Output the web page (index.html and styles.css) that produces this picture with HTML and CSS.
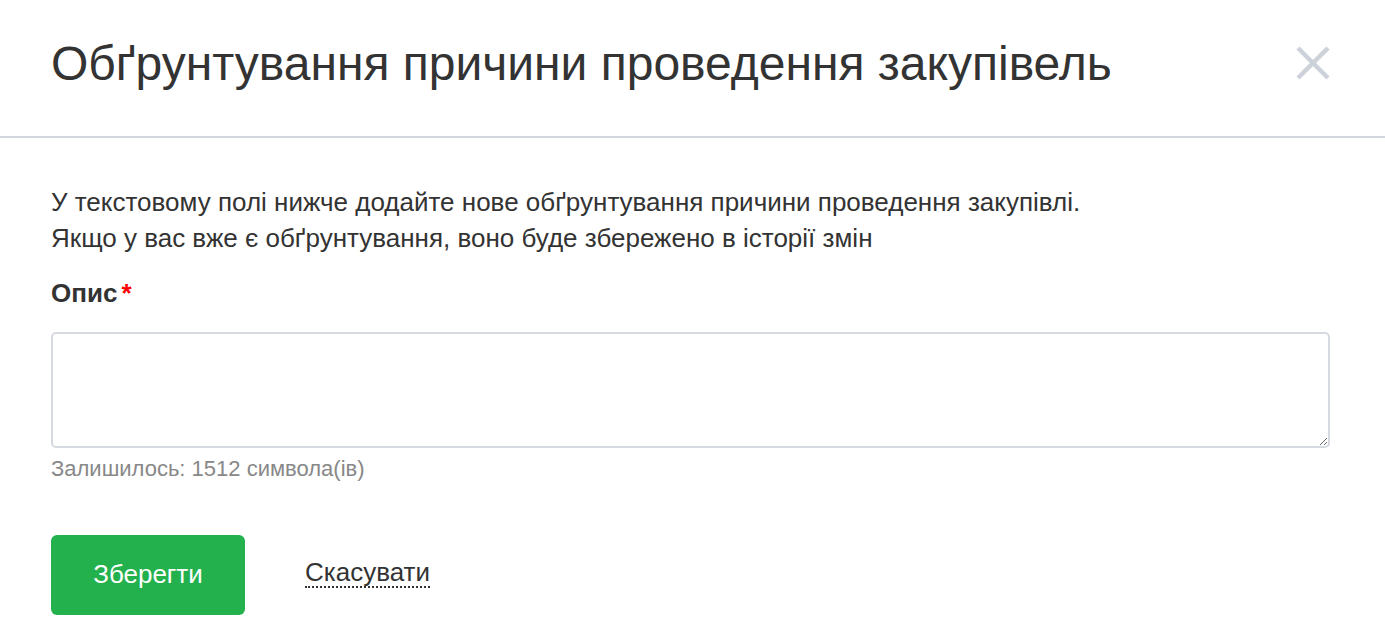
FILE: index.html
```html
<!DOCTYPE html>
<html lang="uk">
<head>
<meta charset="utf-8">
<link rel="stylesheet" href="styles.css">
</head>
<body>
<div class="modal">
  <div class="modal-header">
    <h1 class="modal-title">Обґрунтування причини проведення закупівель</h1>
    <button class="close" aria-label="Закрити">
      <svg width="34" height="34" viewBox="0 0 34 34"><path d="M2 2 L32 32 M32 2 L2 32" stroke="#cdd1da" stroke-width="4.5" fill="none"/></svg>
    </button>
  </div>
  <div class="modal-body">
    <p class="intro">У текстовому полі нижче додайте нове обґрунтування причини проведення закупівлі.<br>Якщо у вас вже є обґрунтування, воно буде збережено в історії змін</p>
    <label class="label">Опис<span class="req">*</span></label>
    <textarea class="field"></textarea>
    <div class="hint">Залишилось: 1512 символа(ів)</div>
    <div class="actions">
      <button class="btn-save">Зберегти</button>
      <a class="cancel">Скасувати</a>
    </div>
  </div>
</div>
</body>
</html>
```
FILE: styles.css
```css
html, body { margin: 0; padding: 0; background: #fff; }
body { font-family: "Liberation Sans", Arial, sans-serif; color: #333; }
.modal { width: 1385px; }
.modal-header {
  display: flex; align-items: center; justify-content: space-between;
  padding: 0 55px 10px 51px; height: 126px;
  border-bottom: 2px solid #d3d6de;
}
.modal-title { margin: 0; font-weight: 400; font-size: 48px; color: #333; }
.close { border: 0; background: none; padding: 0; margin: 0; display: flex; cursor: pointer; }
.modal-body { padding: 46px 55px 0 51px; }
.intro { margin: 0; font-size: 26px; line-height: 36px; color: #333; }
.label { display: block; margin-top: 20px; font-weight: 700; font-size: 26px; line-height: 34px; color: #333; }
.req { color: #f00; margin-left: 4px; }
.field {
  display: block; box-sizing: border-box; width: 1279px; height: 116px; margin-top: 22px;
  border: 2px solid #d6d9e0; border-radius: 5px; resize: vertical; font: inherit;
}
.hint { margin-top: 8px; font-size: 22px; line-height: 26px; color: #888; }
.actions { display: flex; align-items: center; gap: 60px; margin-top: 53px; }
.btn-save {
  width: 194px; height: 80px; border: 0; border-radius: 6px; background: #23b14d; color: #fff;
  font-family: inherit; font-size: 26px; padding: 0 0 2px;
}
.cancel { font-size: 26px; color: #333; border-bottom: 2px dotted #333; line-height: 28px; margin-bottom: 4px; }
```
